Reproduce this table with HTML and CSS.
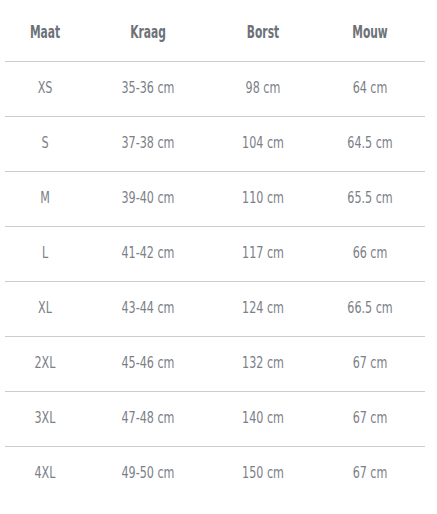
FILE: index.html
```html
<!DOCTYPE html>
<html>
<head>
<meta charset="utf-8">
<link rel="stylesheet" href="styles.css">
</head>
<body>
<div class="table">
  <div class="row head"><div>Maat</div><div>Kraag</div><div>Borst</div><div>Mouw</div></div>
  <div class="row"><div>XS</div><div>35-36 cm</div><div>98 cm</div><div>64 cm</div></div>
  <div class="row"><div>S</div><div>37-38 cm</div><div>104 cm</div><div>64.5 cm</div></div>
  <div class="row"><div>M</div><div>39-40 cm</div><div>110 cm</div><div>65.5 cm</div></div>
  <div class="row"><div>L</div><div>41-42 cm</div><div>117 cm</div><div>66 cm</div></div>
  <div class="row"><div>XL</div><div>43-44 cm</div><div>124 cm</div><div>66.5 cm</div></div>
  <div class="row"><div>2XL</div><div>45-46 cm</div><div>132 cm</div><div>67 cm</div></div>
  <div class="row"><div>3XL</div><div>47-48 cm</div><div>140 cm</div><div>67 cm</div></div>
  <div class="row last"><div>4XL</div><div>49-50 cm</div><div>150 cm</div><div>67 cm</div></div>
</div>
</body>
</html>
```
FILE: styles.css
```css
html, body { margin: 0; padding: 0; background: #fff; }
body { padding-left: 5px; }
.table {
  width: 420px;
  font-family: "DejaVu Sans Condensed", "DejaVu Sans", sans-serif;
  font-stretch: condensed;
  color: #7b8087;
}
.row {
  display: grid;
  grid-template-columns: 80px 126px 104px 110px;
  height: 54px;
  border-bottom: 1px solid #cccccc;
  align-items: center;
  text-align: center;
  font-size: 15.5px;
}
.row > div { transform: scaleX(0.8); padding-bottom: 2px; }
.row.head {
  height: 60px;
  padding-top: 1px;
  box-sizing: content-box;
  font-weight: bold;
  font-size: 17.5px;
  color: #6d7278;
}
.row.head > div { transform: scaleX(0.68); padding-top: 2px; padding-bottom: 0; }
.row.last { border-bottom: none; }
```
